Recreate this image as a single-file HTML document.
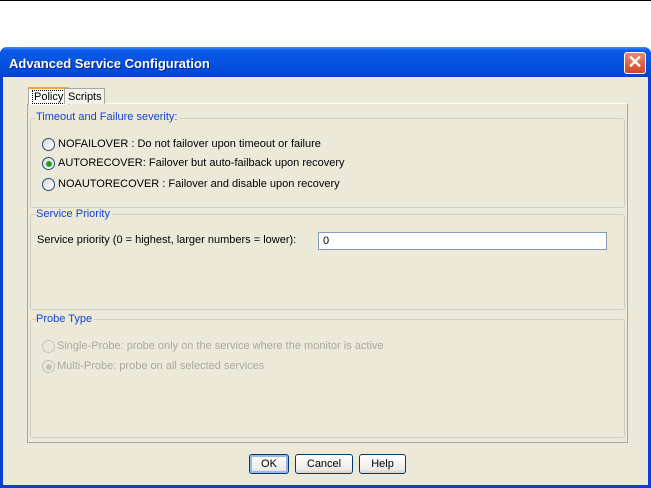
<!DOCTYPE html>
<html><head><style>
*{margin:0;padding:0;box-sizing:border-box}
body{width:651px;height:488px;background:#fff;position:relative;overflow:hidden;font-family:"Liberation Sans",sans-serif;font-size:11px;color:#000}
.a{position:absolute;white-space:nowrap}
.win{left:0;top:47px;width:651px;height:441px;background:#0a3fd9;border-radius:7px 7px 0 0}
.title{left:0;top:47px;width:651px;height:30px;border-radius:7px 7px 0 0;background:linear-gradient(#3c8cf8 0,#0a5ae8 12%,#0553e0 50%,#0049d8 85%,#0a40c8 100%)}
.tt{left:9px;top:56px;color:#fff;font-weight:bold;font-size:13px;text-shadow:1px 1px #0a1e80}
.close{left:624px;top:52px;width:22px;height:22px;border:1px solid #fff;border-radius:3px;background:linear-gradient(#e98a6a,#d2442a);color:#fff;font-weight:bold;font-size:18px;line-height:19px;text-align:center}
.body{left:3px;top:77px;width:645px;height:408px;background:#ece9d8}
.panel{left:27px;top:103px;width:601px;height:340px;border:1px solid #a9a79c;border-top-color:#fff;background:#ece9d8}
.tab{top:88px;height:16px;border:1px solid #a9a79c;border-bottom:none;background:#f4f3ee;font-size:11px;padding:2px 3px}
.grp{border:1px solid #d0cebf;border-radius:3px;left:30px;width:595px}
.lg{color:#1046d8;background:#ece9d8;padding-right:2px;font-size:11px}
.rad{width:13px;height:13px;border:1px solid #1c5180;border-radius:50%;background:linear-gradient(135deg,#dcd9cf,#fff)}
.dis{border-color:#c4c2b8;background:#ece9d8}
.btn{top:454px;height:20px;border:1px solid #003c74;border-radius:3px;background:linear-gradient(#fff,#ecebe6 80%,#d6d0c5);text-align:center;line-height:18px}
</style></head><body>
<div class="a" style="left:0;top:0;width:651px;height:1px;background:#000"></div>
<div class="a win"></div>
<div class="a title"></div>
<div class="a tt">Advanced Service Configuration</div>
<div class="a close">✕</div>
<div class="a body"></div>
<div class="a panel"></div>
<div class="a tab" style="left:28px;top:87px;height:18px;background:#fcfcfe;border-top:2px solid #f4a72c;"><span style="border:1px dotted #000;padding:0 1px">Policy</span></div>
<div class="a tab" style="left:64px;width:41px">Scripts</div>

<div class="a grp" style="top:118px;height:90px"></div>
<div class="a lg" style="left:36px;top:111px">Timeout and Failure severity:</div>
<div class="a rad" style="left:42px;top:138px"></div><div class="a" style="left:58px;top:138px">NOFAILOVER : Do not failover upon timeout or failure</div>
<div class="a rad" style="left:42px;top:157px"></div><div class="a" style="left:46px;top:161px;width:6px;height:6px;border-radius:50%;background:#21a121"></div><div class="a" style="left:58px;top:157px">AUTORECOVER: Failover but auto-failback upon recovery</div>
<div class="a rad" style="left:42px;top:178px"></div><div class="a" style="left:58px;top:178px">NOAUTORECOVER : Failover and disable upon recovery</div>

<div class="a grp" style="top:214px;height:96px"></div>
<div class="a lg" style="left:36px;top:208px">Service Priority</div>
<div class="a" style="left:37px;top:234px">Service priority (0 = highest, larger numbers = lower):</div>
<div class="a" style="left:318px;top:232px;width:289px;height:18px;border:1px solid #7f9db9;background:#fff;padding:2px 4px">0</div>

<div class="a grp" style="top:319px;height:119px"></div>
<div class="a lg" style="left:36px;top:313px">Probe Type</div>
<div class="a rad dis" style="left:42px;top:340px"></div><div class="a" style="left:57px;top:340px;color:#aca899">Single-Probe: probe only on the service where the monitor is active</div>
<div class="a rad dis" style="left:42px;top:360px"></div><div class="a" style="left:46px;top:364px;width:6px;height:6px;border-radius:50%;background:#c4c2b8"></div><div class="a" style="left:57px;top:360px;color:#aca899">Multi-Probe: probe on all selected services</div>

<div class="a btn" style="left:249px;width:40px;box-shadow:inset 0 0 0 2px #98b8ea">OK</div>
<div class="a btn" style="left:295px;width:58px">Cancel</div>
<div class="a btn" style="left:359px;width:47px">Help</div>
</body></html>
